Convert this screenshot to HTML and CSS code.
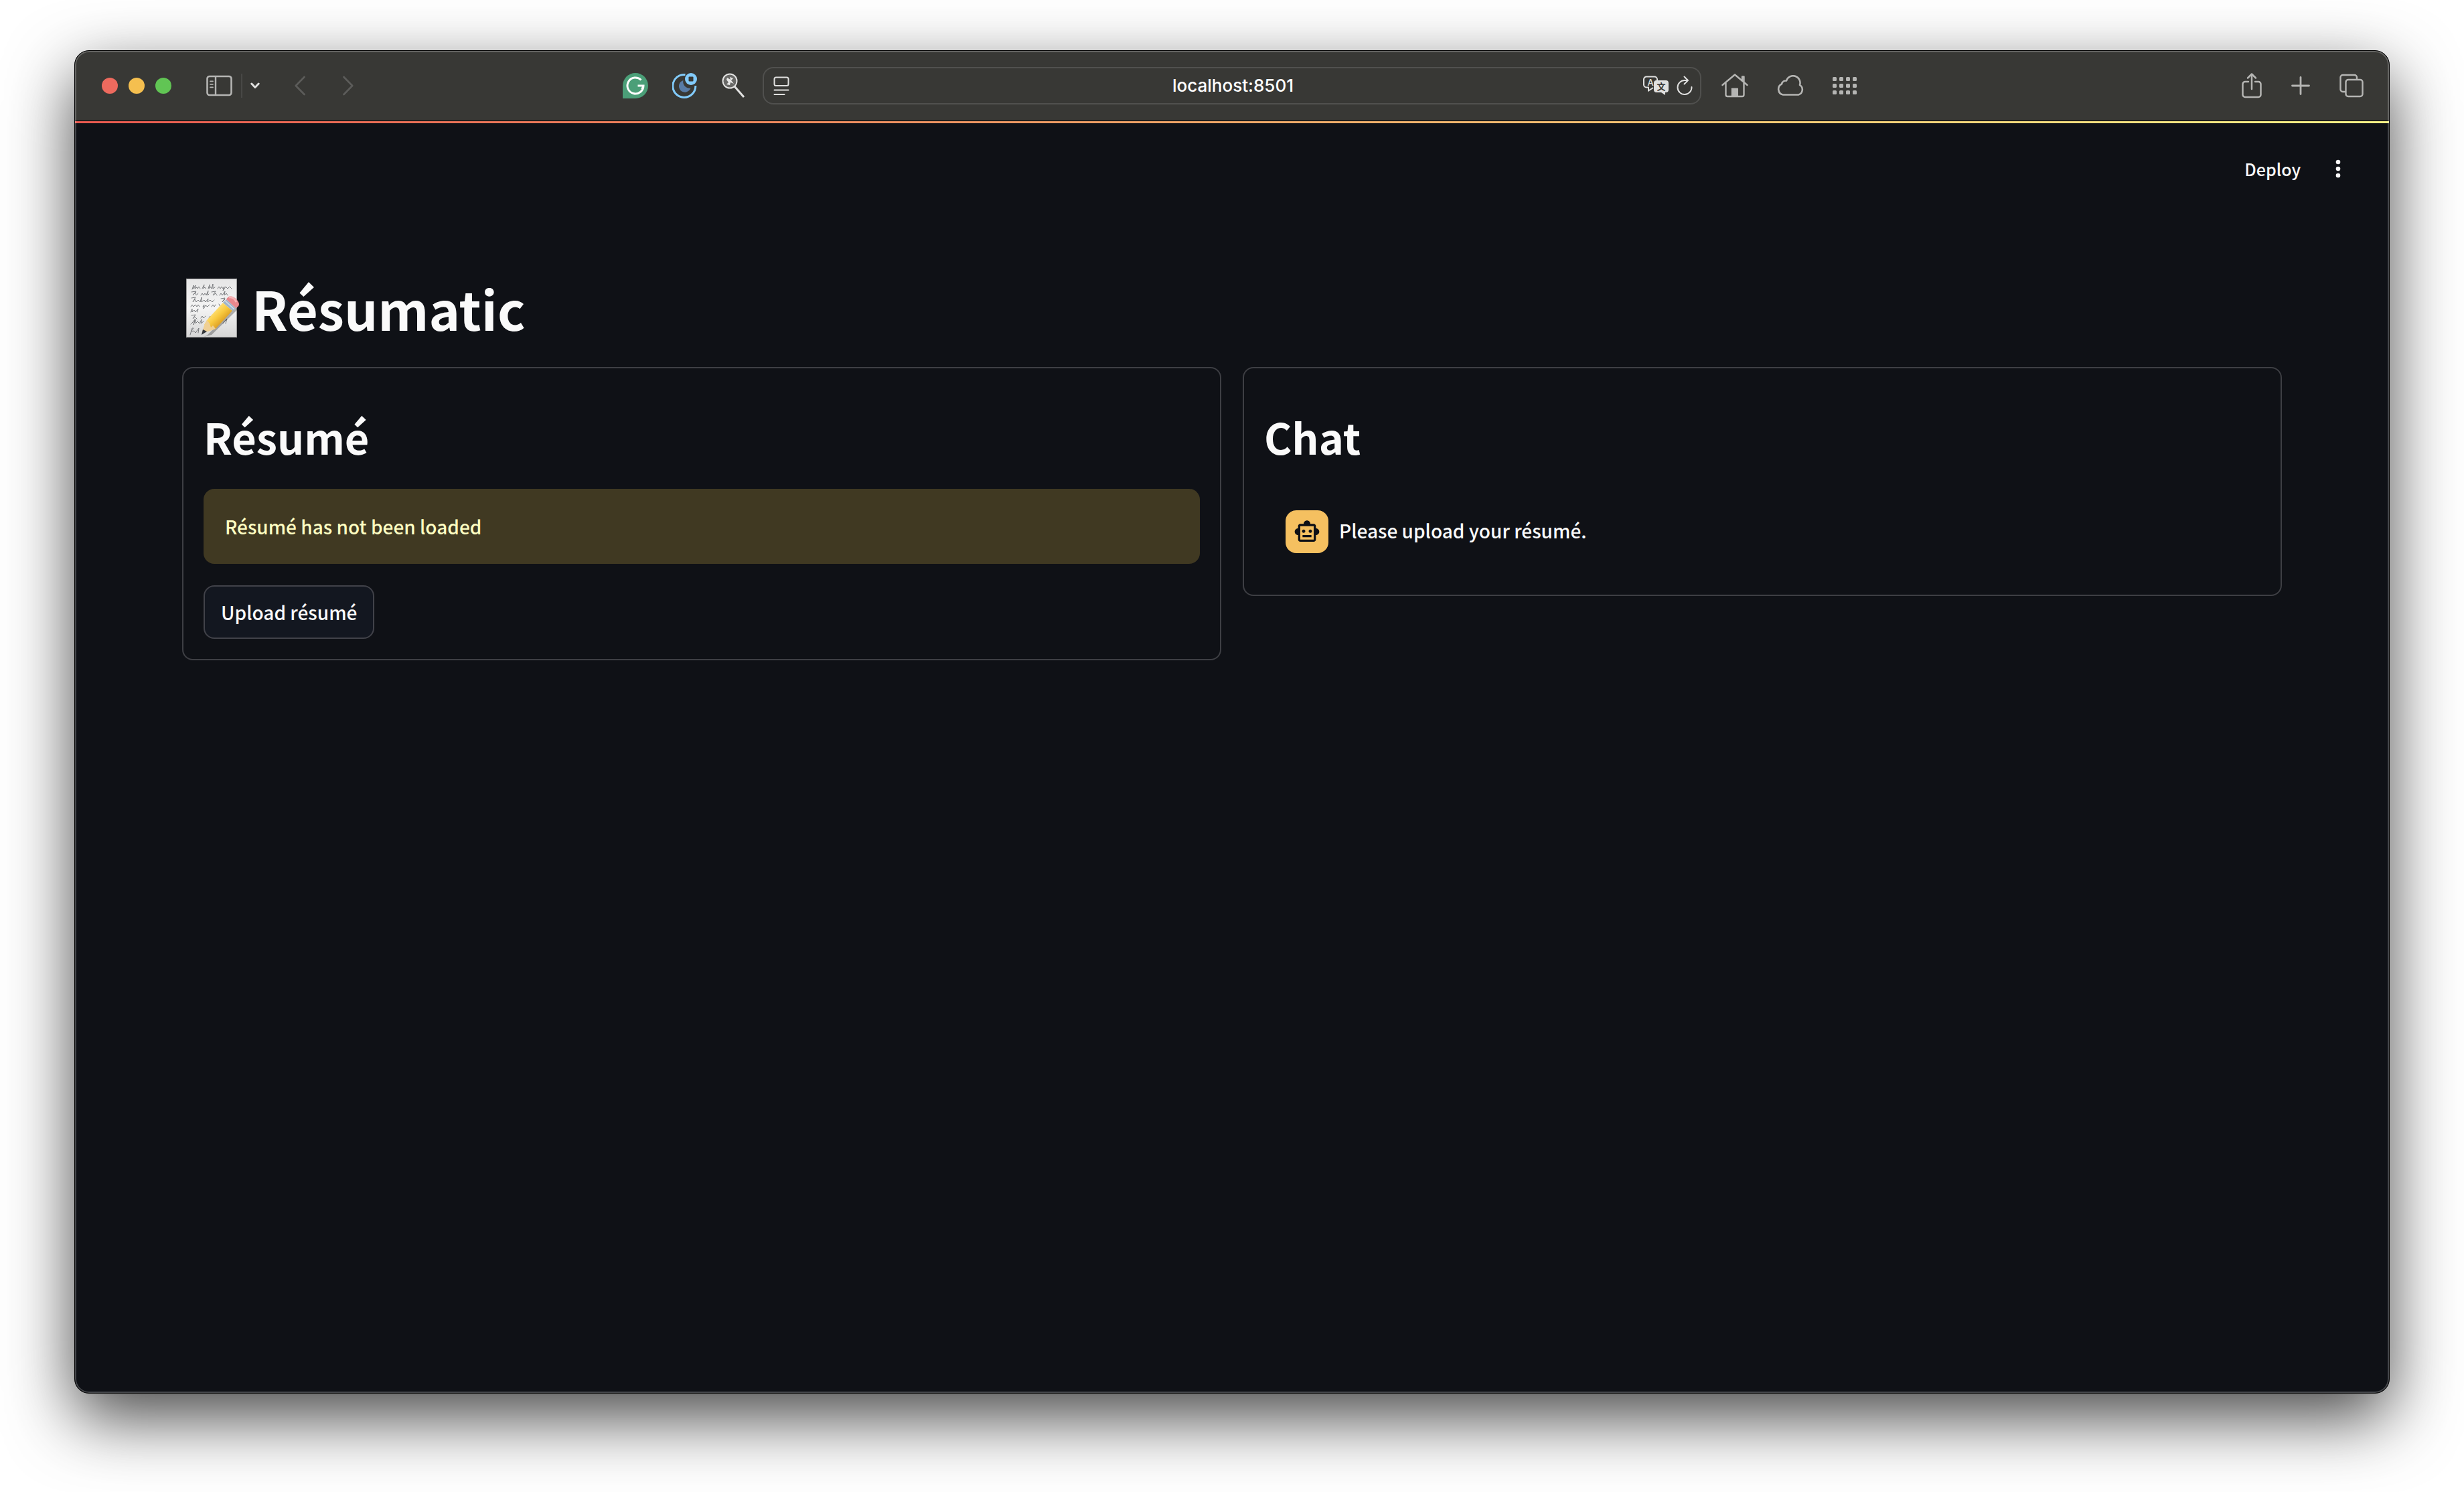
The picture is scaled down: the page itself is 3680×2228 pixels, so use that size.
FILE: index.html
```html
<!DOCTYPE html>
<html lang="en">
<head>
<meta charset="utf-8">
<title>Résumatic</title>
<meta name="viewport" content="width=device-width, initial-scale=1">
<link rel="stylesheet" href="styles.css">
</head>
<body>
<div class="window">
  <header class="toolbar">
    <div class="toolbar-side">
      <div class="lights">
        <button class="light light-close" aria-label="Close"></button>
        <button class="light light-minimise" aria-label="Minimise"></button>
        <button class="light light-zoom" aria-label="Zoom"></button>
      </div>
      <div class="sidebar-tools">
        <button class="tool" aria-label="Sidebar"><svg width="40" height="32" viewBox="0 0 40 32" fill="none" stroke="currentColor"><rect x="1.5" y="2" width="36" height="28" rx="3.5" stroke-width="2.6"/><path d="M14 2v28" stroke-width="2.4"/><path d="M6 9.300h4M6 13.800h4M6 18.300h4" stroke-width="1.800" stroke-linecap="round"/></svg></button>
        <span class="divider"></span>
        <button class="tool tool-bright" aria-label="Tab groups"><svg width="14" height="10" viewBox="0 0 14 10" fill="none" stroke="currentColor" stroke-width="3" stroke-linecap="round" stroke-linejoin="round"><path d="M1.800 2L7 7.500L12.200 2"/></svg></button>
      </div>
      <nav class="history" aria-label="History">
        <button class="tool" aria-label="Back" disabled><svg width="16" height="30" viewBox="0 0 16 30" fill="none" stroke="currentColor" stroke-width="2.600" stroke-linecap="round" stroke-linejoin="round"><path d="M14.500 2L1.800 15L14.500 28"/></svg></button>
        <button class="tool" aria-label="Forward" disabled><svg width="16" height="30" viewBox="0 0 16 30" fill="none" stroke="currentColor" stroke-width="2.600" stroke-linecap="round" stroke-linejoin="round"><path d="M1.500 2L14.200 15L1.500 28"/></svg></button>
      </nav>
      <div class="extensions">
        <button class="tool" aria-label="Writing assistant"><svg width="38" height="38" viewBox="0 0 38 38"><path d="M19 0a19 19 0 1 1 0 38H0V19A19 19 0 0 1 19 0z" fill="#4b9f78"/><path d="M27.500 10.500A12 12 0 1 0 31 19H22.500" fill="none" stroke="#fff" stroke-width="3"/><path d="M31 19l-2.500 5" stroke="#fff" stroke-width="2.600"/></svg></button>
        <button class="tool" aria-label="Dark mode"><svg width="38" height="38" viewBox="0 0 38 38"><path d="M19.500 2.500A17 17 0 1 0 34.800 19" fill="none" stroke="#82cbfb" stroke-width="3"/><path d="M16.500 11A9 9 0 1 0 27.500 22.500A9.500 9.500 0 0 1 16.500 11z" fill="#587ba6"/><circle cx="28" cy="9" r="9" fill="#82cbfb"/><rect x="24.500" y="5.500" width="7" height="7" rx="1" fill="#383835"/></svg></button>
        <button class="tool" aria-label="Inspect"><svg width="36" height="38" viewBox="0 0 36 38"><path d="M19 20L33 36" stroke="#e2e2e1" stroke-width="3"/><circle cx="12" cy="12" r="10.500" fill="#686866" stroke="#e2e2e1" stroke-width="2"/><path d="M8 7l5 3-1-4 5 2-3 3 4 5-5-2-1 4-5-1 3-3-3-4z" fill="#e8e8e7"/></svg></button>
      </div>
    </div>

    <div class="address">
      <button class="tool tool-bright" aria-label="Page menu"><svg width="24" height="28" viewBox="0 0 24 28" fill="none" stroke="currentColor" stroke-width="2" stroke-linecap="round"><rect x="1.500" y="1.500" width="21" height="12.500" rx="2.500"/><path d="M1.500 20.500h21M1.500 27h15"/></svg></button>
      <input class="address-input" type="text" value="localhost:8501" aria-label="Address">
      <div class="address-tools">
        <button class="tool tool-bright" aria-label="Translate"><svg width="38" height="30" viewBox="0 0 38 30"><path d="M15 18l-7 4.500V17.500H5A4 4 0 0 1 1 13.500V5.500A4 4 0 0 1 5 1.500H17A4 4 0 0 1 21 5.500V8" fill="none" stroke="currentColor" stroke-width="2"/><path d="M20 7H34a4 4 0 0 1 4 4v10a4 4 0 0 1-4 4H33v4l-6-4H20a4 4 0 0 1-4-4V11a4 4 0 0 1 4-4z" fill="currentColor"/><text class="glyph-latin" x="11" y="14.500" text-anchor="middle">A</text><text class="glyph-han" x="27" y="20.500" text-anchor="middle">文</text></svg></button>
        <button class="tool tool-bright" aria-label="Reload"><svg width="24" height="30" viewBox="0 0 24 30" fill="none" stroke="currentColor" stroke-width="2" stroke-linecap="round" stroke-linejoin="round"><path d="M22.500 17A10.500 10.500 0 1 1 12 7H16.500M11.500 1.500L17 7L11.500 12.500"/></svg></button>
      </div>
    </div>

    <div class="toolbar-side toolbar-side-right">
      <div class="page-tools">
        <button class="tool" aria-label="Home"><svg width="40" height="38" viewBox="0 0 40 38" fill="none" stroke="currentColor" stroke-width="2.400" stroke-linecap="round" stroke-linejoin="round"><path d="M1.500 18L20 2.500L38.500 18M6.500 15V32.500A2.500 2.500 0 0 0 9 35H31A2.500 2.500 0 0 0 33.500 32.500V15M31 11V5.500H33.500V13"/><path d="M15.500 23H24.500V35H15.500z" fill="currentColor" stroke-width="1"/></svg></button>
        <button class="tool" aria-label="iCloud tabs"><svg width="42" height="32" viewBox="0 0 42 32" fill="none" stroke="currentColor" stroke-width="2.600" stroke-linejoin="round"><path d="M10 29.500A8.500 8.500 0 0 1 8 13.500A6.500 6.500 0 0 1 15 8.500A10.500 10.500 0 0 1 35 15A8 8 0 0 1 33 29.500z"/></svg></button>
        <button class="tool" aria-label="Start page"><svg width="36" height="26" viewBox="0 0 36 26" fill="currentColor"><rect width="6" height="6" rx="1.500"/><rect x="10" width="6" height="6" rx="1.500"/><rect x="20" width="6" height="6" rx="1.500"/><rect x="30" width="6" height="6" rx="1.500"/><rect y="10" width="6" height="6" rx="1.500"/><rect x="10" y="10" width="6" height="6" rx="1.500"/><rect x="20" y="10" width="6" height="6" rx="1.500"/><rect x="30" y="10" width="6" height="6" rx="1.500"/><rect y="20" width="6" height="6" rx="1.500"/><rect x="10" y="20" width="6" height="6" rx="1.500"/><rect x="20" y="20" width="6" height="6" rx="1.500"/><rect x="30" y="20" width="6" height="6" rx="1.500"/></svg></button>
      </div>
      <div class="window-tools">
        <button class="tool" aria-label="Share"><svg width="30" height="40" viewBox="0 0 30 40" fill="none" stroke="currentColor" stroke-width="2.500" stroke-linecap="round" stroke-linejoin="round"><path d="M10 14H5A3.500 3.500 0 0 0 1.500 17.500V33.500A3.500 3.500 0 0 0 5 37H25A3.500 3.500 0 0 0 28.500 33.500V17.500A3.500 3.500 0 0 0 25 14H20M15 25V2.500M9 8.500L15 2.500L21 8.500"/></svg></button>
        <button class="tool" aria-label="New tab"><svg width="28" height="28" viewBox="0 0 28 28" fill="none" stroke="currentColor" stroke-width="2.800" stroke-linecap="round"><path d="M14 1.500V26.500M1.500 14H26.500"/></svg></button>
        <button class="tool" aria-label="Tab overview"><svg width="36" height="36" viewBox="0 0 36 36" fill="none" stroke="currentColor" stroke-width="2.400" stroke-linejoin="round"><rect x="9.500" y="9" width="25" height="25" rx="3.500"/><path d="M9.500 27H5A3.500 3.500 0 0 1 1.500 23.500V5.500A3.500 3.500 0 0 1 5 2H22.500A3.500 3.500 0 0 1 26 5.500V9"/></svg></button>
      </div>
    </div>
  </header>

  <div class="page">
    <div class="app-bar">
      <button class="app-button">Deploy</button>
      <button class="app-button" aria-label="Main menu"><svg width="8" height="28" viewBox="0 0 8 28" fill="currentColor"><circle cx="4" cy="4" r="3.300"/><circle cx="4" cy="14" r="3.300"/><circle cx="4" cy="24" r="3.300"/></svg></button>
    </div>

    <main class="content">
      <h1 class="title">
        <svg class="memo" viewBox="-6 0 104 88" aria-hidden="true">
          <defs>
            <linearGradient id="paper" x1="0" y1="0" x2="0" y2="1"><stop offset="0" stop-color="#e6e6e6"/><stop offset=".5" stop-color="#f4f4f4"/><stop offset="1" stop-color="#d6d6d6"/></linearGradient>
            <linearGradient id="shaft" x1="0" y1="0" x2="1" y2="1"><stop offset=".3" stop-color="#ffe27a"/><stop offset=".5" stop-color="#f8c93f"/><stop offset=".72" stop-color="#d99a20"/></linearGradient>
          </defs>
          <rect x=".5" y=".5" width="75" height="87" fill="url(#paper)" stroke="#9a9a9a"/>
          <g fill="none" stroke="#77797c" stroke-width="1" stroke-linecap="round" stroke-linejoin="round">
            <path d="M9 16l2-6 0 5 3-5-1 5 3-2 1 2 2-3 2 3M24 15l3-6-1 6 2-2 1 2M33 15l2-6-1 6 2-3 2 3 2-7 0 7 3-2M47 15l2-3 2 3 2-3 2 3 2-3-2 6 4-6 3 3 3-3 3 3"/>
            <path d="M8 20l7-1-5 6 4-5 1 5 3-3M22 25l2-3 2 3 2-3 2 3 3-7-1 7 2-2M38 20l6-1-4 6 4-3 2 3M50 25l2-3 2 3 4-6-1 6 3-3 2 3"/>
            <path d="M8 29l6-1-4 7 3-4 2 4 3-3 3 3 2-7 0 7 4-3 2 3 4-5-1 5 4-3 3 3 3-3M52 30l6-1-4 6 4-4"/>
            <path d="M7 42l2-3 2 3 3-3 2 3 2-3 2 3M25 42l2-3-1 6 3-5 3 2 3-3M38 42l2-3 2 3 2-3M49 38l2 4"/>
            <path d="M7 50l2-5 0 5 3-3 2 3 4-5-1 5"/>
            <path d="M8 55l6-1-4 6 3-3 3 3M22 59l2-3 2 3 3-3M34 59l2-3 2 3"/>
            <path d="M7 68l3-3 3-4-2 8 3-8 0 6 3-3 3 3 3-6-1 6 4-3"/>
            <path d="M6 84l3-10 2 0-4 5 4-1 3 3 2-3 3-4-1 7M55 67l2-3 4-4-2 7"/>
          </g>
          <path d="M31 85L73 43l5 2-40 39-12 3z" fill="#000" opacity=".28"/>
          <path d="M55 36L69 48L43 76L27 69L31 62z" fill="url(#shaft)"/>
          <path d="M31 62L27 70L24 80L33 79L44 75L40 70L37 73L35 67z" fill="#efcf94"/>
          <path d="M25 76L23 84L31 79z" fill="#33363a"/>
          <path d="M55 36L60 31L74 44L69 48z" fill="#9fb4ca"/>
          <path d="M58 33L72 46" stroke="#d3dfe9" stroke-width="1.500"/>
          <path d="M60 31C63 25 70 25 75 31C80 36 81 41 74 44z" fill="#e8878d"/>
          <path d="M64 28C69 27 73 31 75 35" fill="none" stroke="#f6b4b5" stroke-width="3"/>
        </svg>
        <span>Résumatic</span>
      </h1>

      <div class="columns">
        <section class="card">
          <h2 class="card-title">Résumé</h2>
          <div class="alert" role="alert">Résumé has not been loaded</div>
          <button class="upload">Upload résumé</button>
        </section>
        <section class="card">
          <h2 class="card-title">Chat</h2>
          <div class="message">
            <span class="avatar"><svg width="40" height="40" viewBox="0 0 24 24" fill="currentColor" aria-hidden="true"><path d="M20 9V7c0-1.100-.9-2-2-2h-3c0-1.660-1.340-3-3-3S9 3.340 9 5H6c-1.100 0-2 .9-2 2v2c-1.660 0-3 1.340-3 3s1.340 3 3 3v4c0 1.100.9 2 2 2h12c1.100 0 2-.9 2-2v-4c1.660 0 3-1.340 3-3s-1.340-3-3-3zm-2 10H6V7h12v12zm-9-6c-.83 0-1.500-.67-1.500-1.500S8.170 10 9 10s1.500.67 1.500 1.500S9.830 13 9 13zm7.500-1.500c0 .83-.67 1.500-1.500 1.500s-1.500-.67-1.500-1.500.67-1.500 1.500-1.500 1.500.67 1.500 1.500zM8 15h8v2H8v-2z"/></svg></span>
            <p class="message-text">Please upload your résumé.</p>
          </div>
        </section>
      </div>
    </main>
  </div>
</div>
</body>
</html>
```

FILE: styles.css
```css
* {
  box-sizing: border-box;
}

body {
  display: flex;
  min-height: 100vh;
  margin: 0;
  padding: 75px 111px 147px;
  background: #fff;
  color: #fafafa;
  font-family: "Noto Sans CJK SC", "Noto Sans", sans-serif;
  font-size: 28px;
  font-weight: 500;
  line-height: 48px;
}

button,
input {
  margin: 0;
  padding: 0;
  border: 0;
  background: none;
  color: inherit;
  font: inherit;
}

svg {
  display: block;
}

/* Browser window */

.window {
  position: relative;
  display: flex;
  flex: 1;
  flex-direction: column;
  overflow: hidden;
  border: 1px solid #000;
  border-radius: 22px;
  background: #0f1116;
  box-shadow: 0 36px 100px rgba(0, 0, 0, 0.72);
}

/* Light rim over the window's inner edge */
.window::after {
  content: "";
  position: absolute;
  inset: 0;
  border: 2px solid rgba(255, 255, 255, 0.22);
  border-radius: 21px;
  pointer-events: none;
}

.toolbar {
  display: grid;
  grid-template-columns: 1fr minmax(400px, 1402px) 1fr;
  align-items: center;
  height: 105px;
  border-bottom: 1px solid #000;
  background: #383835;
}

.toolbar-side {
  display: flex;
  align-items: center;
  padding: 0 25px 0 40px;
}

.toolbar-side-right {
  justify-content: space-between;
  padding: 0 38px 0 30px;
}

.lights {
  display: flex;
  gap: 16px;
}

.light {
  width: 24px;
  height: 24px;
  border-radius: 50%;
}

.light-close {
  background: #ed6a5e;
}

.light-minimise {
  background: #f5bf4f;
}

.light-zoom {
  background: #61c554;
}

.tool {
  color: #b5b5b3;
}

.tool:disabled {
  color: #5c5c5a;
}

.tool-bright {
  color: #e0e0df;
}

.sidebar-tools {
  display: flex;
  align-items: center;
  gap: 12px;
  margin-left: 52px;
}

.divider {
  width: 2px;
  height: 36px;
  background: #484846;
}

.history {
  display: flex;
  gap: 56px;
  margin-left: 52px;
}

.extensions {
  display: flex;
  align-items: center;
  gap: 36px;
  margin-left: auto;
}

.address {
  display: flex;
  align-items: center;
  justify-content: space-between;
  height: 56px;
  padding: 0 11px 0 14px;
  border: 2px solid #50504e;
  border-radius: 16px;
}

.address-input {
  flex: 1;
  min-width: 0;
  padding-left: 50px;
  color: #fff;
  font-family: Inter, "Liberation Sans", sans-serif;
  font-size: 26px;
  line-height: 32px;
  text-align: center;
}

.address-tools {
  display: flex;
  gap: 12px;
}

.glyph-latin {
  fill: currentColor;
  font-family: Inter, sans-serif;
  font-size: 13px;
}

.glyph-han {
  fill: #383835;
  font-size: 13px;
  font-weight: 700;
}

.page-tools,
.window-tools {
  display: flex;
  align-items: center;
  gap: 44px;
}

.page-tools {
  gap: 42px;
}

/* App */

.page {
  flex: 1;
}

.page::before {
  content: "";
  display: block;
  height: 3px;
  background: linear-gradient(90deg, #ea5a50, #f0a868 50%, #f9f387);
}

.app-bar {
  display: flex;
  align-items: center;
  justify-content: flex-end;
  gap: 52px;
  height: 136px;
  padding: 0 72px;
}

.app-button {
  font-size: 25px;
}

.content {
  padding: 96px 160px;
}

.title {
  display: flex;
  margin: 0 0 44px;
  font-size: 79px;
  font-weight: 700;
  line-height: 88px;
}

.memo {
  width: 104px;
  height: 88px;
}

.columns {
  display: grid;
  grid-template-columns: 1fr 1fr;
  align-items: start;
  gap: 32px;
}

.card {
  display: flex;
  flex-direction: column;
  align-items: flex-start;
  gap: 32px;
  padding: 30px;
  border: 2px solid #3e3f44;
  border-radius: 16px;
}

.card-title {
  margin: 0;
  padding: 32px 0 6px;
  font-size: 63px;
  font-weight: 600;
  line-height: 80px;
}

.alert {
  align-self: stretch;
  padding: 32px;
  border-radius: 16px;
  background: #403922;
  color: #ffffc2;
}

.upload {
  height: 80px;
  padding: 0 24px;
  border: 2px solid #414249;
  border-radius: 16px;
  background: #131720;
}

.message {
  display: flex;
  gap: 16px;
  padding: 32px;
}

.avatar {
  display: grid;
  place-items: center;
  width: 64px;
  height: 64px;
  border-radius: 16px;
  background: #f5c060;
  color: #0f1116;
}

.message-text {
  margin: 0;
  padding: 6px 0 10px;
}
```
